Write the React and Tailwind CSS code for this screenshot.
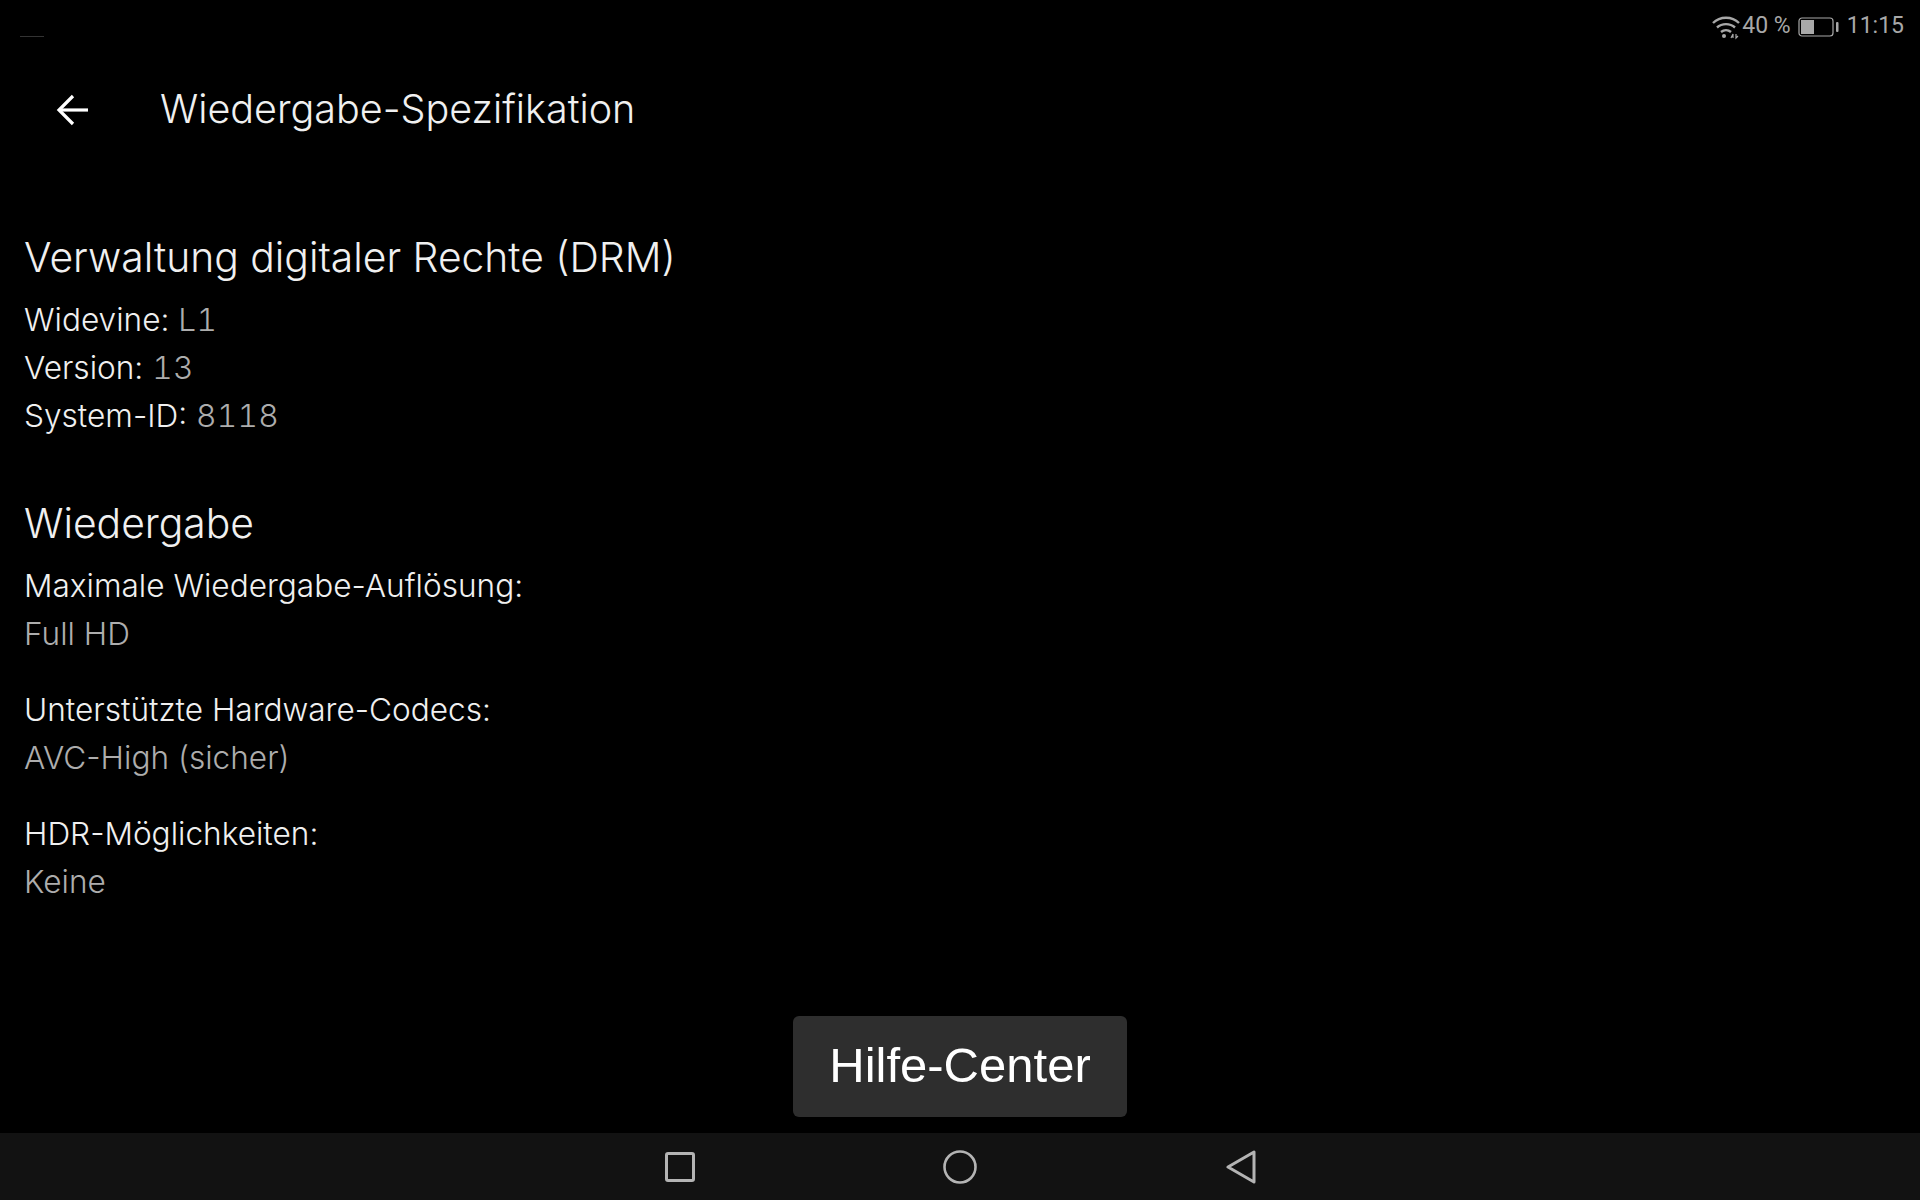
import React from 'react';

function Spec({ label, value }) {
  return (
    <div className="text-[31.6px] leading-[48px] font-[350]">
      <div className="text-[#f0f0f0]">{label}</div>
      <div className="text-[#adadad]">{value}</div>
    </div>
  );
}

function Inline({ label, value }) {
  return (
    <div className="text-[31.6px] leading-[48px] font-[350] text-[#f0f0f0]">
      {label} <span className="text-[#adadad] tabular-nums tracking-[0.3px]">{value}</span>
    </div>
  );
}

function StatusBar() {
  return (
    <div className="h-[50px] flex items-center justify-end pr-[16px] pt-[3px] text-[#a8a8a8] text-[23px] font-['Roboto',sans-serif]">
      {/* wifi */}
      <svg width="30" height="26" viewBox="0 0 30 26" fill="none" stroke="#a8a8a8" strokeWidth="2.4" className="mr-[1px]">
        <path d="M2 9 C9 2 21 2 28 9" />
        <path d="M6 13.5 C11 9 19 9 24 13.5" />
        <path d="M10 18 C13 15.5 17 15.5 20 18" />
        <circle cx="13" cy="22" r="2" fill="#a8a8a8" stroke="none" />
        <path d="M20 24 l2 -4 v4 M25 20 v4 l2 -2" strokeWidth="1.2" />
      </svg>
      <span>40 %</span>
      {/* battery */}
      <svg width="42" height="20" viewBox="0 0 42 20" fill="none" className="ml-[7px] mr-[7px]">
        <rect x="1" y="1" width="34" height="18" rx="3" stroke="#a8a8a8" strokeWidth="1.2" />
        <rect x="3" y="3" width="13" height="14" fill="#a8a8a8" />
        <rect x="38" y="5" width="2.5" height="10" rx="1" fill="#a8a8a8" />
      </svg>
      <span>11:15</span>
    </div>
  );
}

function NavBar() {
  return (
    <div className="h-[67px] bg-[#121212] flex items-center justify-center">
      <div className="w-[591px] flex items-center justify-between">
        <svg width="30" height="30" viewBox="0 0 30 30" fill="none" stroke="#b4b4b4" strokeWidth="3">
          <rect x="1.5" y="1.5" width="27" height="27" rx="1.5" />
        </svg>
        <svg width="34" height="34" viewBox="0 0 34 34" fill="none" stroke="#b4b4b4" strokeWidth="2.6">
          <circle cx="17" cy="17" r="15.5" />
        </svg>
        <svg width="30" height="34" viewBox="0 0 30 34" fill="none" stroke="#b4b4b4" strokeWidth="3" strokeLinejoin="round">
          <path d="M28 2 V32 L2 17 Z" />
        </svg>
      </div>
    </div>
  );
}

export default function App() {
  return (
    <div className="w-[1920px] h-[1200px] bg-black flex flex-col font-['Inter',sans-serif] overflow-hidden">
      <div className="relative">
        <StatusBar />
        <div className="absolute left-[20px] top-[36px] w-[24px] h-px bg-[#333333]" />
      </div>

      {/* header */}
      <div className="h-[120px] flex items-center">
        <div className="w-[160px] pl-[56px]">
          <svg width="34" height="32" viewBox="0 0 34 32" fill="none" stroke="#ffffff" strokeWidth="3.2">
            <path d="M32 16 H3" />
            <path d="M17 2 L3 16 L17 30" />
          </svg>
        </div>
        <div className="text-[39.5px] text-[#f0f0f0] font-light">Wiedergabe-Spezifikation</div>
      </div>

      <div className="flex-1 pl-[24px] pt-[60px]">
        <div className="text-[40.8px] leading-[54px] text-[#f0f0f0] font-light mb-[12px]">Verwaltung digitaler Rechte (DRM)</div>
        <Inline label="Widevine:" value="L1" />
        <Inline label="Version:" value="13" />
        <Inline label="System-ID:" value="8118" />

        <div className="text-[40.8px] leading-[54px] text-[#f0f0f0] font-light mt-[56px] mb-[12px]">Wiedergabe</div>
        <div className="flex flex-col gap-[28px]">
          <Spec label="Maximale Wiedergabe-Auflösung:" value="Full HD" />
          <Spec label="Unterstützte Hardware-Codecs:" value="AVC-High (sicher)" />
          <Spec label="HDR-Möglichkeiten:" value="Keine" />
        </div>
      </div>

      <div className="flex justify-center pb-[16px]">
        <div className="w-[334px] h-[101px] rounded-[6px] bg-[#2e2e2e] flex items-center justify-center pb-[2px] text-white text-[49px] font-['Liberation_Sans',sans-serif]">
          Hilfe-Center
        </div>
      </div>

      <NavBar />
    </div>
  );
}
